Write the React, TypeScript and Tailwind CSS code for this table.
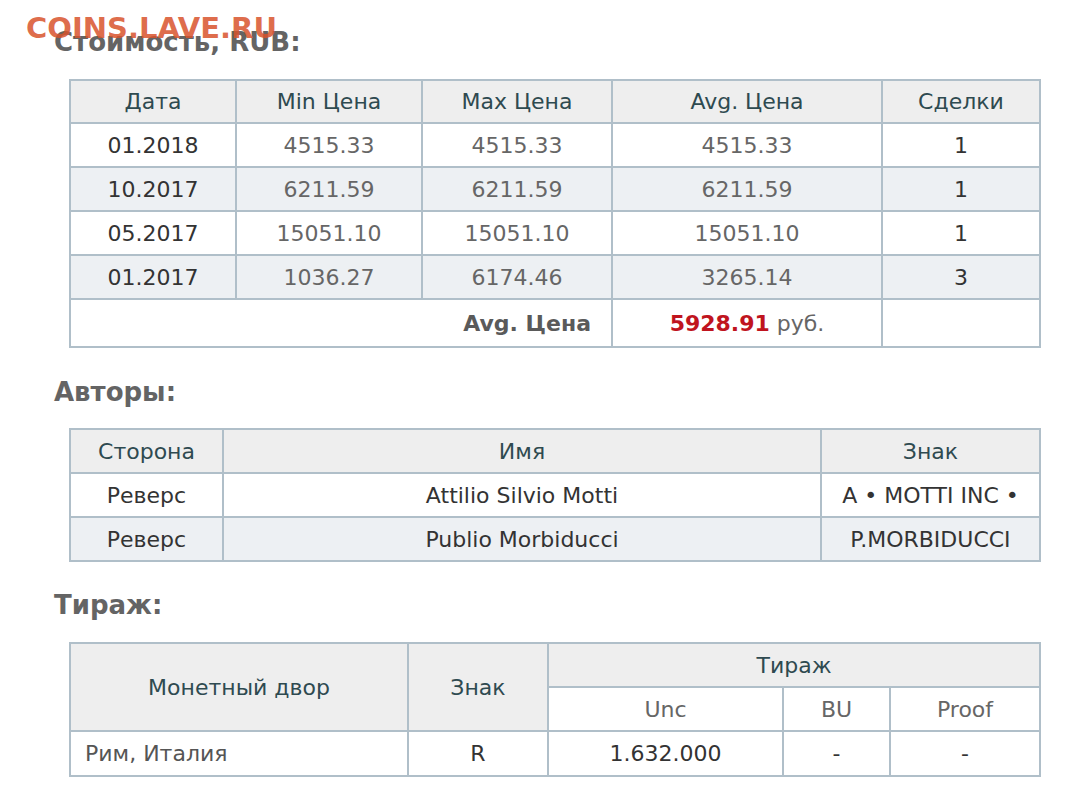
import React from "react";

const B = "border-2 border-[#b0bfc9]";

function H({ children }: { children: string }) {
  return (
    <h2 className="text-[26px] leading-[32px] font-bold text-[#646464]">{children}</h2>
  );
}

export default function App() {
  const rows = [
    ["01.2018", "4515.33", "4515.33", "4515.33", "1"],
    ["10.2017", "6211.59", "6211.59", "6211.59", "1"],
    ["05.2017", "15051.10", "15051.10", "15051.10", "1"],
    ["01.2017", "1036.27", "6174.46", "3265.14", "3"],
  ];
  return (
    <div
      className="relative w-[1078px] h-[810px] bg-white overflow-hidden"
      style={{ fontFamily: '"DejaVu Sans", Verdana, sans-serif' }}
    >
      <div className="absolute left-[26px] top-[9px] text-[29px] leading-[38px] font-bold text-[#d8532c]/85 z-10">
        COINS.LAVE.RU
      </div>
      <div className="pl-[54px] pt-[26px] text-[22px]">
        <H>Стоимость, RUB:</H>
        <table className={`mt-[21px] ml-[15px] w-[970px] table-fixed border-collapse ${B}`}>
          <colgroup>
            <col className="w-[166px]" />
            <col className="w-[186px]" />
            <col className="w-[190px]" />
            <col className="w-[270px]" />
            <col className="w-[158px]" />
          </colgroup>
          <thead>
            <tr className="h-[43px] bg-[#eeeeee] text-[#2e4a50]">
              {["Дата", "Min Цена", "Max Цена", "Avg. Цена", "Сделки"].map((t) => (
                <th key={t} className={`${B} font-normal text-center`}>{t}</th>
              ))}
            </tr>
          </thead>
          <tbody>
            {rows.map((r, i) => (
              <tr key={i} className={`h-[44px] ${i % 2 ? "bg-[#edf0f3]" : "bg-white"}`}>
                <td className={`${B} text-center text-[#333333]`}>{r[0]}</td>
                <td className={`${B} text-center text-[#666666]`}>{r[1]}</td>
                <td className={`${B} text-center text-[#666666]`}>{r[2]}</td>
                <td className={`${B} text-center text-[#666666]`}>{r[3]}</td>
                <td className={`${B} text-center text-[#333333]`}>{r[4]}</td>
              </tr>
            ))}
            <tr className="h-[48px] bg-white">
              <td colSpan={3} className={`${B} text-right pr-[20px] font-bold text-[#5a5a5a]`}>
                Avg. Цена
              </td>
              <td className={`${B} text-center text-[#666666]`}>
                <span className="font-bold text-[#c0141e]">5928.91</span> руб.
              </td>
              <td className={B}></td>
            </tr>
          </tbody>
        </table>

        <div className="mt-[28px]">
          <H>Авторы:</H>
        </div>
        <table className={`mt-[20px] ml-[15px] w-[970px] table-fixed border-collapse ${B}`}>
          <colgroup>
            <col className="w-[153px]" />
            <col className="w-[598px]" />
            <col className="w-[219px]" />
          </colgroup>
          <thead>
            <tr className="h-[44px] bg-[#eeeeee] text-[#2e4a50]">
              {["Сторона", "Имя", "Знак"].map((t) => (
                <th key={t} className={`${B} font-normal text-center`}>{t}</th>
              ))}
            </tr>
          </thead>
          <tbody>
            <tr className="h-[44px] bg-white text-[#333333]">
              <td className={`${B} text-center`}>Реверс</td>
              <td className={`${B} text-center`}>Attilio Silvio Motti</td>
              <td className={`${B} text-center whitespace-nowrap`}>A • MOTTI INC •</td>
            </tr>
            <tr className="h-[44px] bg-[#edf0f3] text-[#333333]">
              <td className={`${B} text-center`}>Реверс</td>
              <td className={`${B} text-center`}>Publio Morbiducci</td>
              <td className={`${B} text-center`}>P.MORBIDUCCI</td>
            </tr>
          </tbody>
        </table>

        <div className="mt-[27px]">
          <H>Тираж:</H>
        </div>
        <table className={`mt-[21px] ml-[15px] w-[970px] table-fixed border-collapse ${B}`}>
          <colgroup>
            <col className="w-[338px]" />
            <col className="w-[140px]" />
            <col className="w-[235px]" />
            <col className="w-[107px]" />
            <col className="w-[150px]" />
          </colgroup>
          <thead>
            <tr className="h-[44px] bg-[#eeeeee] text-[#2e4a50]">
              <th rowSpan={2} className={`${B} font-normal text-center`}>Монетный двор</th>
              <th rowSpan={2} className={`${B} font-normal text-center`}>Знак</th>
              <th colSpan={3} className={`${B} font-normal text-center`}>Тираж</th>
            </tr>
            <tr className="h-[44px] text-[#666666]">
              <th className={`${B} bg-white font-normal text-center`}>Unc</th>
              <th className={`${B} bg-white font-normal text-center`}>BU</th>
              <th className={`${B} bg-white font-normal text-center`}>Proof</th>
            </tr>
          </thead>
          <tbody>
            <tr className="h-[45px] bg-white text-[#333333]">
              <td className={`${B} text-left pl-[14px] text-[#555555]`}>Рим, Италия</td>
              <td className={`${B} text-center`}>R</td>
              <td className={`${B} text-center`}>1.632.000</td>
              <td className={`${B} text-center`}>-</td>
              <td className={`${B} text-center`}>-</td>
            </tr>
          </tbody>
        </table>
      </div>
    </div>
  );
}
